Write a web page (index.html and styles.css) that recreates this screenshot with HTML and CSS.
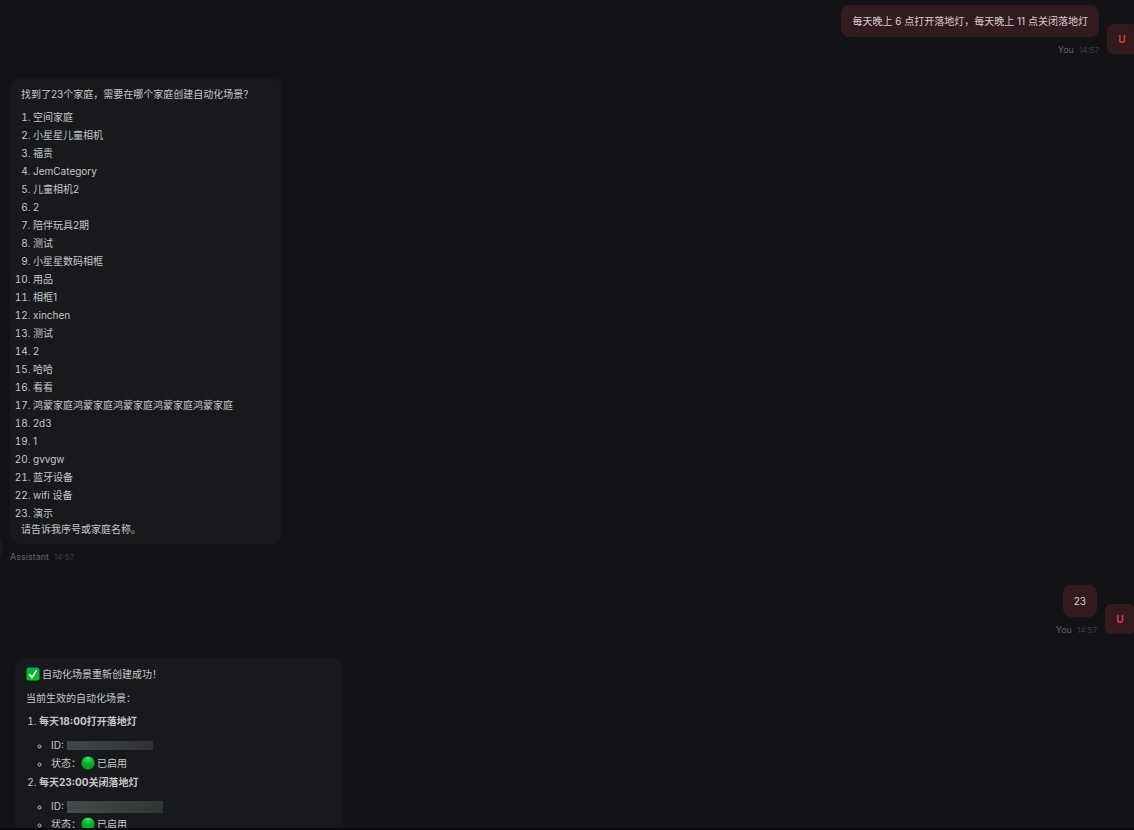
FILE: index.html
```html
<!DOCTYPE html>
<html lang="zh-CN">
<head>
<meta charset="utf-8">
<title>Chat</title>
<link rel="stylesheet" href="styles.css">
</head>
<body>
<main class="chat">
  <article class="message user">
    <div class="body">
      <div class="bubble">每天晚上 6 点打开落地灯，每天晚上 11 点关闭落地灯</div>
      <div class="meta"><span>You</span><time>14:57</time></div>
    </div>
    <div class="avatar">U</div>
  </article>

  <article class="message assistant">
    <div class="avatar"></div>
    <div class="body">
      <div class="bubble">
        <p>找到了23个家庭，需要在哪个家庭创建自动化场景？</p>
        <ol class="homes">
          <li>空间家庭</li>
          <li>小星星儿童相机</li>
          <li>福贵</li>
          <li>JemCategory</li>
          <li>儿童相机2</li>
          <li>2</li>
          <li>陪伴玩具2期</li>
          <li>测试</li>
          <li>小星星数码相框</li>
          <li>用品</li>
          <li>相框1</li>
          <li>xinchen</li>
          <li>测试</li>
          <li>2</li>
          <li>哈哈</li>
          <li>看看</li>
          <li>鸿蒙家庭鸿蒙家庭鸿蒙家庭鸿蒙家庭鸿蒙家庭</li>
          <li>2d3</li>
          <li>1</li>
          <li>gvvgw</li>
          <li>蓝牙设备</li>
          <li>wifi 设备</li>
          <li>演示</li>
        </ol>
        <p>请告诉我序号或家庭名称。</p>
      </div>
      <div class="meta"><span>Assistant</span><time>14:57</time></div>
    </div>
  </article>

  <article class="message user reply">
    <div class="body">
      <div class="bubble">23</div>
      <div class="meta"><span>You</span><time>14:57</time></div>
    </div>
    <div class="avatar">U</div>
  </article>

  <article class="message assistant result">
    <div class="body">
      <div class="bubble">
        <p class="status"><svg class="icon" viewBox="0 0 14 14" role="img" aria-label="完成"><defs><linearGradient id="tile" x1="0" y1="0" x2="0" y2="1"><stop offset="0" stop-color="#08ab3c"/><stop offset="1" stop-color="#08c51f"/></linearGradient></defs><rect x=".5" y=".5" width="13" height="13" rx="2" fill="url(#tile)"/><path d="M3.4 7.3 6 10.4 10.6 3.4" fill="none" stroke="#fff" stroke-width="1.7"/></svg>自动化场景重新创建成功！</p>
        <p class="lead">当前生效的自动化场景：</p>
        <ol class="scenes">
          <li><strong>每天18:00打开落地灯</strong>
            <ul>
              <li>ID: <span class="redacted"></span></li>
              <li>状态：<svg class="icon" viewBox="0 0 14 14" aria-hidden="true"><defs><radialGradient id="light" cx=".5" cy=".15" r=".85"><stop offset="0" stop-color="#3bea5c"/><stop offset=".45" stop-color="#08b72e"/><stop offset="1" stop-color="#079426"/></radialGradient></defs><circle cx="7" cy="7" r="6.6" fill="url(#light)"/></svg>已启用</li>
            </ul>
          </li>
          <li><strong>每天23:00关闭落地灯</strong>
            <ul>
              <li>ID: <span class="redacted large"></span></li>
              <li>状态：<svg class="icon" viewBox="0 0 14 14" aria-hidden="true"><circle cx="7" cy="7" r="6.6" fill="url(#light)"/></svg>已启用</li>
            </ul>
          </li>
        </ol>
      </div>
    </div>
  </article>
</main>
<footer class="edge"></footer>
</body>
</html>
```
FILE: styles.css
```css
* {
  box-sizing: border-box;
}

body {
  margin: 0;
  height: 100vh;
  display: flex;
  flex-direction: column;
  overflow: hidden;
  background: #131217;
  color: #c6c7c9;
  font: 10px/16px Inter, "Noto Sans CJK SC", sans-serif;
}

p,
ol,
ul {
  margin: 0;
}

.chat {
  flex: 1;
  min-height: 0;
  overflow: hidden;
  padding-top: 5px;
}

.edge {
  height: 2px;
  background: #0b0910;
}

.message {
  display: flex;
  align-items: flex-end;
}

.user {
  justify-content: flex-end;
  gap: 8px;
  margin-right: -3px;
}

.user .body {
  display: flex;
  flex-direction: column;
  align-items: flex-end;
}

.user .bubble {
  padding: 8px 11px;
  border-radius: 8px;
  background: #321a1e;
  color: #d6cfd1;
}

.reply {
  margin-top: 20px;
  margin-right: -1px;
}

.avatar {
  flex: none;
  width: 30px;
  height: 30px;
  border-radius: 6px;
  background: #321a1e;
  color: #e63c48;
  font-weight: 600;
  line-height: 30px;
  text-align: center;
}

.user .avatar {
  margin-bottom: 4px;
}

.meta {
  display: flex;
  gap: 5px;
  margin-top: 5px;
  color: #626267;
  font-size: 9px;
}

.meta time {
  color: #3d3d42;
  font-size: 8px;
}

.assistant {
  gap: 8px;
  margin-top: 20px;
}

.assistant .avatar {
  height: 24px;
  margin: 0 0 6px -28px;
  background: #191a1e;
}

.assistant .bubble {
  width: 272px;
  padding: 8px 11px 7px;
  border-radius: 10px;
  background: #17191c;
}

.homes {
  margin-top: 7px;
  padding-left: 12px;
}

.homes li {
  margin-bottom: 2px;
}

.homes li:last-child {
  margin-bottom: 0;
}

.result {
  padding-left: 15px;
}

.assistant.result .bubble {
  width: 328px;
}

.icon {
  width: 14px;
  height: 14px;
  margin-right: 2px;
  vertical-align: -3px;
}

.lead {
  margin-top: 8px;
}

.scenes {
  margin-top: 7px;
  padding-left: 13px;
}

.scenes strong {
  font-weight: 700;
}

.scenes ul {
  margin: 8px 0 3px;
  padding-left: 12px;
  list-style: circle;
}

.scenes ul li + li {
  margin-top: 2px;
}

.redacted {
  display: inline-block;
  width: 86px;
  height: 9px;
  background: linear-gradient(90deg, #434748, #2f3132);
  vertical-align: -1px;
}

.redacted.large {
  width: 96px;
  height: 12px;
  background: linear-gradient(90deg, #454b4a, #303435);
  vertical-align: -3px;
}
```
